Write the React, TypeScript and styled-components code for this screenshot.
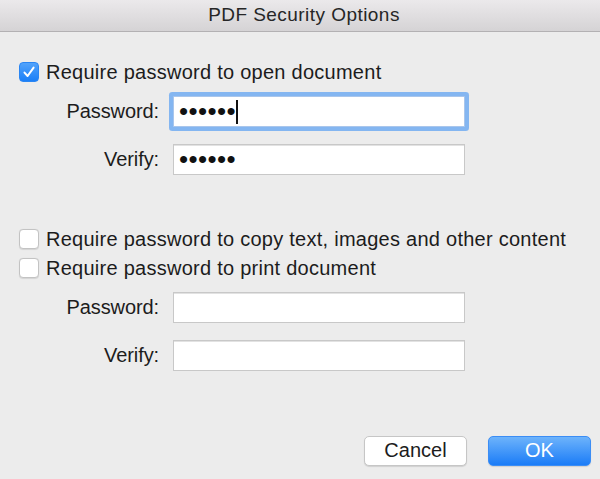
import React from "react";
import styled, { createGlobalStyle } from "styled-components";

const GlobalStyle = createGlobalStyle`
  html, body {
    margin: 0;
    padding: 0;
    background: #ececec;
  }
  * {
    box-sizing: border-box;
  }
`;

const Dialog = styled.div`
  width: 600px;
  height: 479px;
  display: flex;
  flex-direction: column;
  background: #ececec;
  font-family: "Liberation Sans", Arial, sans-serif;
  color: #1c1c1c;
`;

const TitleBar = styled.div`
  height: 32px;
  flex-shrink: 0;
  display: flex;
  align-items: center;
  justify-content: center;
  background: linear-gradient(#ebe9eb, #d5d3d5);
  border-bottom: 1px solid #b3b1b3;
  font-size: 19px;
  letter-spacing: 0.45px;
  color: #262626;
  padding: 0 0 1px 8px;
`;

const Body = styled.div`
  flex: 1;
  display: flex;
  flex-direction: column;
  padding: 30px 9px 13px 19px;
`;

const CheckRow = styled.label<{ $gap?: number }>`
  display: flex;
  align-items: center;
  gap: 7px;
  height: 20px;
  margin-top: ${(p) => p.$gap ?? 0}px;
  font-size: 20px;
  letter-spacing: 0.26px;
  white-space: nowrap;
`;

const Box = styled.span<{ $checked?: boolean }>`
  width: 20px;
  height: 20px;
  flex-shrink: 0;
  border-radius: 4px;
  display: flex;
  align-items: center;
  justify-content: center;
  background: ${(p) =>
    p.$checked ? "linear-gradient(#52a3fb, #1b7ff7)" : "#ffffff"};
  border: 1px solid ${(p) => (p.$checked ? "#2a86f3" : "#c3c3c3")};
  box-shadow: ${(p) => (p.$checked ? "none" : "0 0.5px 1px rgba(0,0,0,0.1)")};
`;

const FormGrid = styled.div<{ $gap: number }>`
  display: grid;
  grid-template-columns: 140px 292px;
  column-gap: 14px;
  row-gap: 17px;
  margin-top: ${(p) => p.$gap}px;
  align-items: center;
`;

const Label = styled.span`
  text-align: right;
  font-size: 20px;
  letter-spacing: -0.1px;
`;

const Field = styled.div<{ $focused?: boolean }>`
  height: 31px;
  background: #fff;
  border: 1px solid ${(p) => (p.$focused ? "#a9c6ec" : "#c8c8c8")};
  box-shadow: ${(p) =>
    p.$focused ? "0 0 0 4px #84b6f1" : "inset 0 1px 0 #e2e2e2"};
  border-radius: ${(p) => (p.$focused ? "1px" : "0")};
  display: flex;
  align-items: center;
  padding-left: 5px;
`;

const Mask = styled.span`
  font-size: 26px;
  letter-spacing: 0.4px;
  line-height: 1;
  color: #111;
  margin-top: -1px;
`;

const Caret = styled.span`
  width: 2px;
  height: 24px;
  background: #111;
`;

const Footer = styled.div`
  margin-top: auto;
  display: flex;
  justify-content: flex-end;
  gap: 21px;
`;

const Button = styled.button<{ $primary?: boolean }>`
  width: 103px;
  height: 30px;
  border-radius: 5px;
  font-family: "Liberation Sans", Arial, sans-serif;
  font-size: 20px;
  padding: 0 0 1px;
  cursor: pointer;
  color: ${(p) => (p.$primary ? "#fff" : "#1c1c1c")};
  background: ${(p) =>
    p.$primary ? "linear-gradient(#6db3fb, #1b7cf7)" : "#fff"};
  border: 1px solid ${(p) => (p.$primary ? "#3b8df5" : "#c6c6c6")};
  box-shadow: 0 1px 1px rgba(0, 0, 0, 0.12);
`;

const Check = () => (
  <svg width="14" height="14" viewBox="0 0 14 14">
    <path
      d="M2.5 7.6 L5.6 11 L11.6 2.6"
      fill="none"
      stroke="#fff"
      strokeWidth="2"
      strokeLinecap="round"
      strokeLinejoin="round"
    />
  </svg>
);

export default function App() {
  return (
    <>
      <GlobalStyle />
      <Dialog>
        <TitleBar>PDF Security Options</TitleBar>
        <Body>
          <CheckRow>
            <Box $checked>
              <Check />
            </Box>
            Require password to open document
          </CheckRow>
          <FormGrid $gap={14}>
            <Label>Password:</Label>
            <Field $focused>
              <Mask>••••••</Mask>
              <Caret />
            </Field>
            <Label>Verify:</Label>
            <Field>
              <Mask>••••••</Mask>
            </Field>
          </FormGrid>

          <CheckRow $gap={54}>
            <Box />
            Require password to copy text, images and other content
          </CheckRow>
          <CheckRow $gap={9}>
            <Box />
            Require password to print document
          </CheckRow>
          <FormGrid $gap={14}>
            <Label>Password:</Label>
            <Field />
            <Label>Verify:</Label>
            <Field />
          </FormGrid>

          <Footer>
            <Button>Cancel</Button>
            <Button $primary>OK</Button>
          </Footer>
        </Body>
      </Dialog>
    </>
  );
}
